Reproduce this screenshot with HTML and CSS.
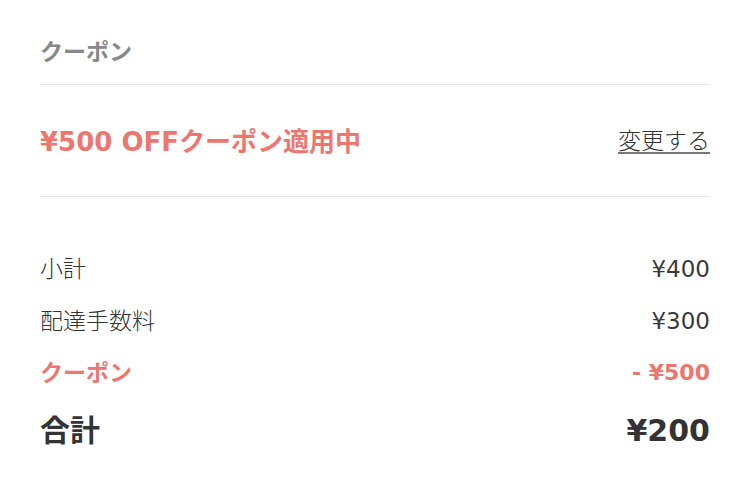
FILE: index.html
```html
<!DOCTYPE html>
<html>

<head>
	<title>クーポン</title>
	<meta charset='utf-8' />
	<link rel="stylesheet" href="styles.css">
</head>

<body>
	<div class="coupon">
		<div class="coupon-head">クーポン</div>
		<div class="coupon-applied">
			<span class="applied-text">¥500 OFFクーポン適用中</span>
			<a href="#" class="change">変更する</a>
		</div>
	</div>
	<div class="summary">
		<div class="row">
			<span class="label">小計</span>
			<span class="price">¥400</span>
		</div>
		<div class="row">
			<span class="label">配達手数料</span>
			<span class="price">¥300</span>
		</div>
		<div class="row discount">
			<span class="label">クーポン</span>
			<span class="price">- ¥500</span>
		</div>
		<div class="row total">
			<span class="label">合計</span>
			<span class="price">¥200</span>
		</div>
	</div>
</body>

</html>
```
FILE: styles.css
```css
body {
	margin: 0;
	padding: 0 40px;
	background: #fff;
	color: #333;
	font-family: "DejaVu Sans", "Noto Sans CJK JP", sans-serif;
}

.coupon-head {
	height: 85px;
	line-height: 48px;
	padding-top: 28px;
	box-sizing: border-box;
	font-size: 23px;
	font-weight: bold;
	color: #888;
	border-bottom: 1px solid #e6e6e6;
}

.coupon-applied {
	display: flex;
	justify-content: space-between;
	align-items: center;
	height: 112px;
	border-bottom: 1px solid #e6e6e6;
	padding-bottom: 3px;
	box-sizing: border-box;
}

.applied-text {
	font-size: 26px;
	font-weight: bold;
	color: #ec7670;
}

.change {
	font-size: 23px;
	font-weight: 300;
	color: #333;
	text-decoration: underline;
	text-underline-offset: 3px;
	text-decoration-color: #777;
}

.summary {
	padding-top: 46px;
}

.row {
	display: flex;
	justify-content: space-between;
	height: 52px;
	line-height: 52px;
	font-size: 23px;
}

.row .label {
	font-weight: 300;
}

.row .price {
	color: #3a3a3a;
}

.row.discount .label,
.row.discount .price {
	font-weight: bold;
	color: #ec7670;
}

.row.discount .price {
	font-size: 22px;
}

.row.total {
	height: 64px;
	line-height: 64px;
	font-size: 30px;
}

.row.total .label,
.row.total .price {
	font-weight: bold;
	color: #333;
}
```
